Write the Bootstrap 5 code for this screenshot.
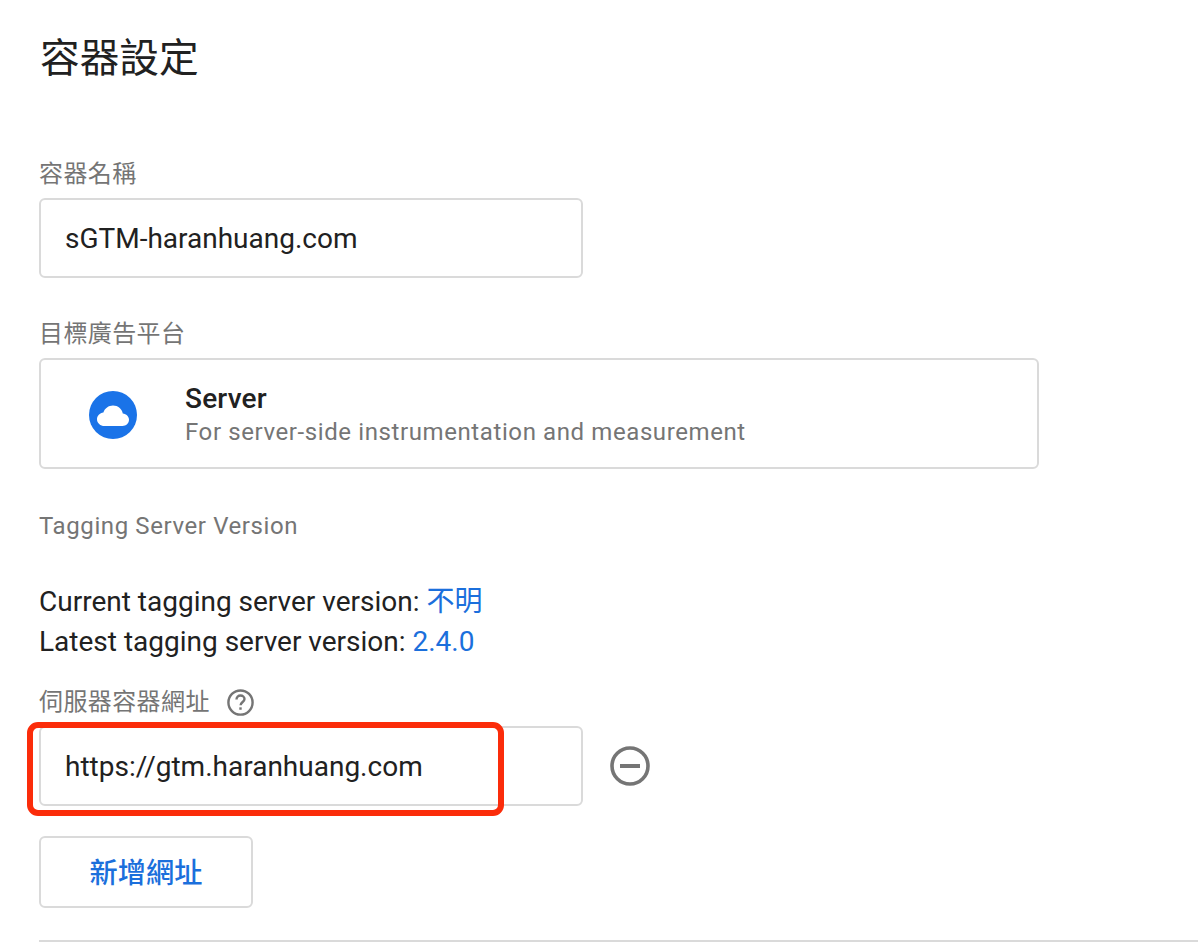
<!DOCTYPE html>
<html lang="zh-Hant">
<head>
<meta charset="utf-8">
<title>容器設定</title>
<link href="https://cdn.jsdelivr.net/npm/bootstrap@5.3.0/dist/css/bootstrap.min.css" rel="stylesheet">
<style>
html,body{height:100%;overflow:hidden;background:#fff}
body{font-family:Roboto,"Noto Sans CJK TC",sans-serif;color:#212121}
.page-wrap{padding:34px 0 0 39px;width:1198px}
.page-title{font-size:39.7px;line-height:50px;font-weight:400;margin:0 0 74px 1px;color:#212121}
.field-label{font-size:24px;line-height:32px;color:#757575;margin:0;letter-spacing:.4px}
.text-box{width:544px;height:80px;border:2px solid #dadada;border-radius:6px;padding:2px 24px 0;font-size:28px;display:flex;align-items:center;background:#fff}
.gap-a{margin-top:8px}
.label-two{margin-top:40px}
.server-box{width:1000px;height:111px;border:2px solid #dadada;border-radius:6px;background:#fff;padding-top:1px}
.server-icon{width:48px;height:48px;margin-left:48px;margin-right:48px;margin-top:2px;flex:none}
.server-name{font-size:28px;line-height:35px;font-weight:500;color:#212121;letter-spacing:.2px}
.server-desc{font-size:24px;line-height:32px;color:#757575;letter-spacing:.6px}
.version-title{font-size:24px;line-height:32px;color:#757575;letter-spacing:.6px;margin-top:41px}
.version-lines{font-size:28px;line-height:40px;margin-top:40px}
.version-lines span{color:#1b6fdc}
.url-label-row{margin-top:24px}
.help-icon{width:29px;height:29px;margin-left:16px}
.url-row{width:544px}
.red-mark{position:absolute;left:-12px;top:-4px;width:477px;height:94px;border:6px solid #fb2c0a;border-radius:11px;pointer-events:none}
.remove-icon{width:44px;height:44px;margin-left:25px}
.add-btn{width:214px;height:72px;border:2px solid #dadada;border-radius:6px;color:#1b6fdc;background:#fff;font-size:28.2px;font-weight:500;padding:4px 0 0;margin-top:30px}
.add-btn:hover{color:#1b6fdc;border-color:#dadada}
.bottom-rule{height:2px;background:#dadada;margin-top:32px;opacity:1;border:0}
</style>
</head>
<body>
<div class="page-wrap">
  <h1 class="page-title">容器設定</h1>

  <p class="field-label">容器名稱</p>
  <div class="text-box gap-a">sGTM-haranhuang.com</div>

  <p class="field-label label-two">目標廣告平台</p>
  <div class="server-box d-flex align-items-center gap-a">
    <svg class="server-icon" viewBox="0 0 48 48" aria-hidden="true">
      <circle cx="24" cy="24" r="24" fill="#1a73e8"/>
      <path d="M15.5 35C11.4 35 8 32 8 28.2c0-3.5 2.8-6.4 6.4-6.8C15.800 17.300 19.600 14.500 24 14.500c4.900 0 9 3.500 9.800 8 3.500.300 6.200 3 6.200 6.300 0 3.400-3 6.200-6.500 6.200z" fill="#fff"/>
    </svg>
    <div>
      <div class="server-name">Server</div>
      <div class="server-desc">For server-side instrumentation and measurement</div>
    </div>
  </div>

  <div class="version-title">Tagging Server Version</div>
  <div class="version-lines">
    <div>Current tagging server version: <span>不明</span></div>
    <div>Latest tagging server version: <span>2.4.0</span></div>
  </div>

  <div class="d-flex align-items-center url-label-row">
    <span class="field-label">伺服器容器網址</span>
    <svg class="help-icon" viewBox="0 0 24 24" aria-hidden="true">
      <circle cx="12" cy="12" r="10" fill="none" stroke="#757575" stroke-width="2"/>
      <path d="M8.700 9.500c0-1.900 1.500-3.300 3.300-3.300s3.300 1.300 3.300 3c0 2.300-3.200 2.500-3.200 5.100" fill="none" stroke="#757575" stroke-width="2"/>
      <rect x="11" y="16" width="2" height="2" fill="#757575"/>
    </svg>
  </div>
  <div class="d-flex align-items-center gap-a">
    <div class="url-row position-relative">
      <div class="text-box">https://gtm.haranhuang.com</div>
      <div class="red-mark"></div>
    </div>
    <svg class="remove-icon" viewBox="0 0 44 44" aria-hidden="true">
      <circle cx="22" cy="22" r="18" fill="none" stroke="#757575" stroke-width="3.600"/>
      <rect x="12" y="20" width="20" height="4" fill="#757575"/>
    </svg>
  </div>
  <button type="button" class="btn add-btn d-block">新增網址</button>
  <hr class="bottom-rule">
</div>
<script src="https://cdn.jsdelivr.net/npm/bootstrap@5.3.0/dist/js/bootstrap.bundle.min.js"></script>
</body>
</html>
